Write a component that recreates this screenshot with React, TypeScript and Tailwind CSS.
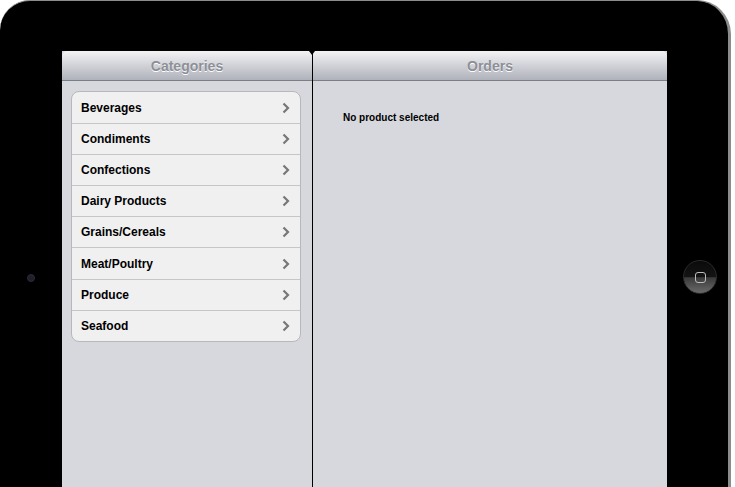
const categories = [
  'Beverages',
  'Condiments',
  'Confections',
  'Dairy Products',
  'Grains/Cereals',
  'Meat/Poultry',
  'Produce',
  'Seafood',
];

const Chevron = () => (
  <svg width="8" height="12" viewBox="0 0 8 12" className="shrink-0">
    <polyline points="1.5,1.5 6,6 1.5,10.5" fill="none" stroke="#777" strokeWidth="2.2" />
  </svg>
);

const PanelHeader = ({ title, corner }: { title: string; corner: string }) => (
  <div
    className={`h-[30px] flex items-center justify-center pt-[2px] bg-gradient-to-b from-[#f3f3f5] to-[#b0b2bb] border-b border-[#7c7e87] ${corner}`}
  >
    <span className="text-[14px] font-bold text-[#8c8f97] [text-shadow:0_1px_0_#fff]">{title}</span>
  </div>
);

const App = () => {
  return (
    <div className="h-screen bg-white overflow-hidden font-['Liberation_Sans',Arial,sans-serif]">
      <div className="flex w-[731px] h-[600px] bg-black rounded-tl-[30px] rounded-tr-[34px] border-t border-r-[3px] border-[#8c8c8c] pt-[50px]">
        {/* left bezel with camera */}
        <div className="w-[62px] flex flex-col items-center pt-[223px]">
          <div className="w-[8px] h-[8px] rounded-full bg-[#20202c] border border-[#2c2c3a]" />
        </div>

        {/* screen */}
        <div className="flex w-[605px] h-[550px]">
          <div className="w-[250px] bg-[#d7d8dd] flex flex-col">
            <PanelHeader title="Categories" corner="rounded-tl-[5px]" />
            <div className="pt-[10px] pl-[9px]">
              <div className="w-[230px] rounded-[8px] border border-[#b8b8bb] bg-[#f0f0f0] overflow-hidden">
                {categories.map((c, i) => (
                  <div
                    key={c}
                    className={`flex items-center justify-between pl-[9px] pr-[10px] ${
                      i > 0 ? 'border-t border-[#c6c6c8]' : ''
                    } ${i === 5 ? 'h-[32px]' : 'h-[31px]'}`}
                  >
                    <span className="text-[12px] font-bold text-black">{c}</span>
                    <Chevron />
                  </div>
                ))}
              </div>
            </div>
          </div>

          <div className="relative w-px bg-black">
            <div className="absolute -left-[3px] top-0 w-0 h-0 border-l-[3.5px] border-r-[3.5px] border-t-[4px] border-l-transparent border-r-transparent border-t-black" />
          </div>

          <div className="w-[354px] bg-[#d7d8dd] flex flex-col">
            <PanelHeader title="Orders" corner="rounded-tr-[5px]" />
            <div className="pt-[23px] pl-[30px]">
              <span className="text-[10px] font-bold text-black">No product selected</span>
            </div>
          </div>
        </div>

        {/* right bezel with home button */}
        <div className="flex-1 pt-[209px] pl-[16px]">
          <div className="w-[34px] h-[34px] rounded-full border border-[#2a2a2a] bg-[linear-gradient(to_bottom,#0a0a0a_0%,#141414_50%,#3a3a3a_52%,#6a6a6a_100%)] flex items-center justify-center">
            <div className="w-[11px] h-[11px] rounded-[3px] border border-[#bdbdbd]" />
          </div>
        </div>
      </div>
    </div>
  );
};

export default App;
